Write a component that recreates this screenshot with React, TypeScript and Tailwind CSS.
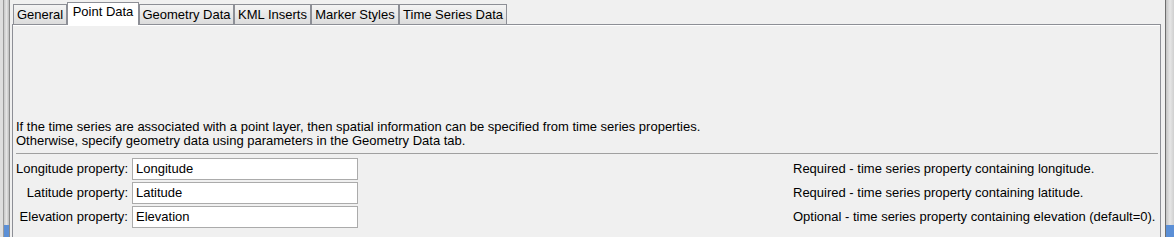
import React from 'react';

const tabs = ['General', 'Point Data', 'Geometry Data', 'KML Inserts', 'Marker Styles', 'Time Series Data'];
const tabWidths = [54, 72, 95, 77, 88, 108];

const rows = [
  { label: 'Longitude property:', value: 'Longitude', note: 'Required - time series property containing longitude.' },
  { label: 'Latitude property:', value: 'Latitude', note: 'Required - time series property containing latitude.' },
  { label: 'Elevation property:', value: 'Elevation', note: 'Optional - time series property containing elevation (default=0).' },
];

function Tab({ label, width, active }: { label: string; width: number; active: boolean }) {
  if (active) {
    return (
      <div
        className="relative z-10 -mb-[1px] flex h-[23px] items-start justify-center border border-b-0 border-[#8d8f96] bg-white pt-[2px]"
        style={{ width }}
      >
        {label}
      </div>
    );
  }
  return (
    <div
      className="flex h-[20px] items-center justify-center border border-b-0 border-[#8d8f96] bg-gradient-to-b from-[#f4f4f4] to-[#dcdcdc] pt-[1px]"
      style={{ width }}
    >
      {label}
    </div>
  );
}

export default function App() {
  return (
    <div className="flex h-[237px] w-[1174px] overflow-hidden bg-[#f0f0f0] font-['Liberation_Sans',Arial,sans-serif] text-[13px] leading-[14px] text-black">
      {/* left frame */}
      <div className="flex w-[12px] shrink-0">
        <div className="w-[3px] bg-[#dedede]" />
        <div className="flex w-[6px] flex-col justify-end border-l border-[#9a9a9a] bg-gradient-to-r from-[#c8c8c8] via-[#e4e4e4] to-[#bdbdbd]">
          <div className="h-[12px] bg-[#5b8fd6]" />
        </div>
        <div className="w-[1px] bg-[#8a8a8a]" />
        <div className="w-[2px]" />
      </div>

      {/* main tabbed pane */}
      <div className="flex h-[260px] w-[1149px] shrink-0 flex-col pt-[2px]">
        <div className="flex items-end pl-[1px]">
          {tabs.map((t, i) => (
            <Tab key={t} label={t} width={tabWidths[i]} active={i === 1} />
          ))}
        </div>
        <div className="flex flex-1 flex-col border border-[#8d8f96]">
          <div className="h-[1px] bg-white" />
          <div className="flex flex-col pl-[3px] pr-[2px] pt-[94px]">
            <p>If the time series are associated with a point layer, then spatial information can be specified from time series properties.</p>
            <p>Otherwise, specify geometry data using parameters in the Geometry Data tab.</p>
            <div className="mt-[5px] h-[1px] bg-[#a0a0a0]" />
            <div className="mt-[4px] flex flex-col gap-[2px]">
              {rows.map((r) => (
                <div key={r.label} className="flex items-center">
                  <span className="w-[112px] whitespace-nowrap text-right">{r.label}</span>
                  <div className="ml-[4px] flex h-[22px] w-[226px] items-center border border-[#ababab] bg-white pl-[3px]">
                    {r.value}
                  </div>
                  <span className="ml-[435px] whitespace-nowrap">{r.note}</span>
                </div>
              ))}
            </div>
          </div>
        </div>
      </div>

      {/* right frame */}
      <div className="flex w-[13px] shrink-0">
        <div className="w-[4px]" />
        <div className="w-[1px] bg-[#6e6e6e]" />
        <div className="flex w-[8px] flex-col justify-end bg-gradient-to-r from-[#c4c4c4] via-[#e6e6e6] to-[#cfcfcf]">
          <div className="h-[12px] bg-[#5b8fd6]" />
        </div>
      </div>
    </div>
  );
}
